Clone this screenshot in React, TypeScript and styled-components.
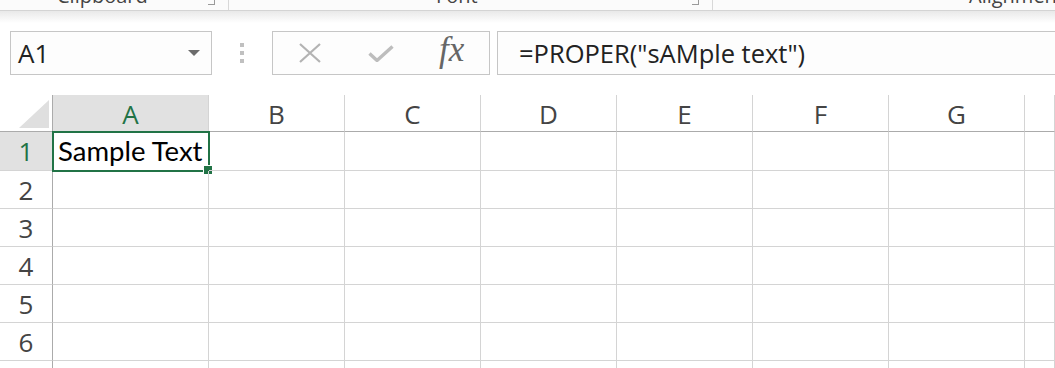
import React from "react";
import styled, { createGlobalStyle } from "styled-components";

const GlobalStyle = createGlobalStyle`
  html, body {
    margin: 0;
    padding: 0;
    background: #ffffff;
    overflow: hidden;
  }
`;

const columns = ["A", "B", "C", "D", "E", "F", "G", ""];
const rows = [1, 2, 3, 4, 5, 6, 7];

const App: React.FC = () => {
  return (
    <Page>
      <GlobalStyle />
      <Ribbon>
        <RibbonGroup $width={229}>
          <GroupLabel $left={57}>Clipboard</GroupLabel>
          <Launcher />
        </RibbonGroup>
        <RibbonGroup $width={484}>
          <GroupLabel $left={207}>Font</GroupLabel>
          <Launcher />
        </RibbonGroup>
        <RibbonGroup $width={400} $last>
          <GroupLabel $left={256}>Alignment</GroupLabel>
        </RibbonGroup>
      </Ribbon>
      <RibbonShadow />

      <FormulaBar>
        <NameBox>
          <NameText>A1</NameText>
          <DropArrow />
        </NameBox>
        <Grip>
          <GripDot />
          <GripDot />
          <GripDot />
        </Grip>
        <FxBox>
          <IconSlot>
            <svg width="24" height="20" viewBox="0 0 24 20">
              <path
                d="M2 1 L22 19 M22 1 L2 19"
                stroke="#b3b3b3"
                strokeWidth="2.2"
                fill="none"
              />
            </svg>
          </IconSlot>
          <IconSlot>
            <svg width="26" height="17" viewBox="0 0 26 17">
              <path
                d="M1.5 8.5 L9 15.5 L24.5 1.5"
                stroke="#bdbdbd"
                strokeWidth="3.4"
                fill="none"
              />
            </svg>
          </IconSlot>
          <FxText>fx</FxText>
        </FxBox>
        <FormulaBox>=PROPER("sAMple text")</FormulaBox>
      </FormulaBar>

      <Sheet>
        <Corner>
          <CornerTriangle />
        </Corner>
        {columns.map((c, i) => (
          <ColHeader key={c || "last"} $selected={i === 0}>
            {c}
          </ColHeader>
        ))}
        {rows.map((r) => (
          <React.Fragment key={r}>
            <RowHeader $selected={r === 1}>{r}</RowHeader>
            {columns.map((c, i) => (
              <Cell key={c || "last"}>
                {r === 1 && i === 0 && (
                  <>
                    <CellText>Sample Text</CellText>
                    <Selection>
                      <FillHandle />
                    </Selection>
                  </>
                )}
              </Cell>
            ))}
          </React.Fragment>
        ))}
      </Sheet>
    </Page>
  );
};

export default App;

const Page = styled.div`
  width: 1055px;
  height: 368px;
  overflow: hidden;
  background: #ffffff;
  font-family: "Open Sans", "Noto Sans", sans-serif;
`;

const Ribbon = styled.div`
  height: 10px;
  display: flex;
  align-items: flex-end;
  background: #fbfbfb;
  border-bottom: 1px solid #d4d4d4;
  overflow: hidden;
`;

const RibbonGroup = styled.div<{ $width: number; $last?: boolean }>`
  flex: 0 0 ${(p) => p.$width}px;
  height: 30px;
  display: flex;
  align-items: flex-end;
  position: relative;
  box-sizing: border-box;
  border-right: ${(p) => (p.$last ? "none" : "1px solid #d8d8d8")};
`;

const GroupLabel = styled.span<{ $left: number }>`
  margin-left: ${(p) => p.$left}px;
  font-size: 20px;
  line-height: 20px;
  margin-bottom: 4px;
  color: #444444;
  white-space: nowrap;
`;

const Launcher = styled.span`
  margin-left: auto;
  margin-right: 13px;
  margin-bottom: 5px;
  width: 6px;
  height: 6px;
  border-right: 1px solid #9a9a9a;
  border-bottom: 1px solid #9a9a9a;
`;

const RibbonShadow = styled.div`
  height: 12px;
  background: linear-gradient(#e9e9e9, #ffffff);
`;

const FormulaBar = styled.div`
  display: flex;
  height: 44px;
  margin-top: 8px;
  padding-left: 10px;
`;

const NameBox = styled.div`
  flex: 0 0 202px;
  box-sizing: border-box;
  border: 1px solid #c6c6c6;
  background: #fdfdfd;
  display: flex;
  align-items: center;
  padding: 0 11px 0 7px;
`;

const NameText = styled.span`
  font-size: 26px;
  color: #222222;
  flex: 1;
`;

const DropArrow = styled.span`
  width: 0;
  height: 0;
  border-left: 6px solid transparent;
  border-right: 6px solid transparent;
  border-top: 6px solid #6b6b6b;
`;

const Grip = styled.div`
  flex: 0 0 60px;
  display: flex;
  flex-direction: column;
  align-items: center;
  justify-content: center;
  gap: 4px;
`;

const GripDot = styled.span`
  width: 4px;
  height: 4px;
  background: #c0c0c0;
`;

const FxBox = styled.div`
  flex: 0 0 218px;
  box-sizing: border-box;
  border: 1px solid #c6c6c6;
  background: #fdfdfd;
  display: flex;
  align-items: center;
  padding-left: 25px;
`;

const IconSlot = styled.span`
  display: flex;
  width: 70px;
`;

const FxText = styled.span`
  font-family: "Liberation Serif", "DejaVu Serif", serif;
  font-style: italic;
  font-size: 35px;
  color: #666666;
  margin-left: 1px;
  margin-top: -6px;
`;

const FormulaBox = styled.div`
  flex: 1;
  margin-left: 7px;
  margin-right: -4px;
  box-sizing: border-box;
  border: 1px solid #c6c6c6;
  background: #fdfdfd;
  display: flex;
  align-items: center;
  padding-left: 21px;
  font-size: 25.5px;
  color: #222222;
  white-space: nowrap;
`;

const Sheet = styled.div`
  margin-top: 20px;
  display: grid;
  grid-template-columns: 53px 156px repeat(6, 136px) 1fr;
  grid-template-rows: 37px 39px repeat(6, 38px);
`;

const Corner = styled.div`
  position: relative;
  box-sizing: border-box;
  border-right: 1px solid #ababab;
  border-bottom: 1px solid #ababab;
`;

const CornerTriangle = styled.div`
  position: absolute;
  right: 3px;
  bottom: 3px;
  width: 30px;
  height: 28px;
  background: #dfdfdf;
  clip-path: polygon(100% 0, 100% 100%, 0 100%);
`;

const ColHeader = styled.div<{ $selected?: boolean }>`
  box-sizing: border-box;
  border-right: 1px solid #d4d4d4;
  border-bottom: 1px solid #ababab;
  background: ${(p) => (p.$selected ? "#e1e1e1" : "#ffffff")};
  color: ${(p) => (p.$selected ? "#217346" : "#444444")};
  display: flex;
  align-items: center;
  justify-content: center;
  font-size: 26px;
  padding-top: 2px;
`;

const RowHeader = styled.div<{ $selected?: boolean }>`
  box-sizing: border-box;
  border-right: 1px solid #ababab;
  border-bottom: 1px solid #d4d4d4;
  background: ${(p) => (p.$selected ? "#e1e1e1" : "#ffffff")};
  color: ${(p) => (p.$selected ? "#217346" : "#444444")};
  display: flex;
  align-items: center;
  justify-content: center;
  font-size: 26px;
`;

const Cell = styled.div`
  position: relative;
  box-sizing: border-box;
  border-right: 1px solid #d4d4d4;
  border-bottom: 1px solid #d4d4d4;
  display: flex;
  align-items: flex-end;
`;

const CellText = styled.span`
  font-family: "Lato", "Open Sans", sans-serif;
  font-size: 27.5px;
  color: #000000;
  padding: 0 0 3px 5px;
  white-space: nowrap;
`;

const Selection = styled.div`
  position: absolute;
  left: -1px;
  top: -1px;
  right: -2px;
  bottom: -2px;
  border: 2px solid #217346;
`;

const FillHandle = styled.div`
  position: absolute;
  right: -5px;
  bottom: -5px;
  width: 8px;
  height: 8px;
  background: #217346;
  border: 1px solid #ffffff;
`;
